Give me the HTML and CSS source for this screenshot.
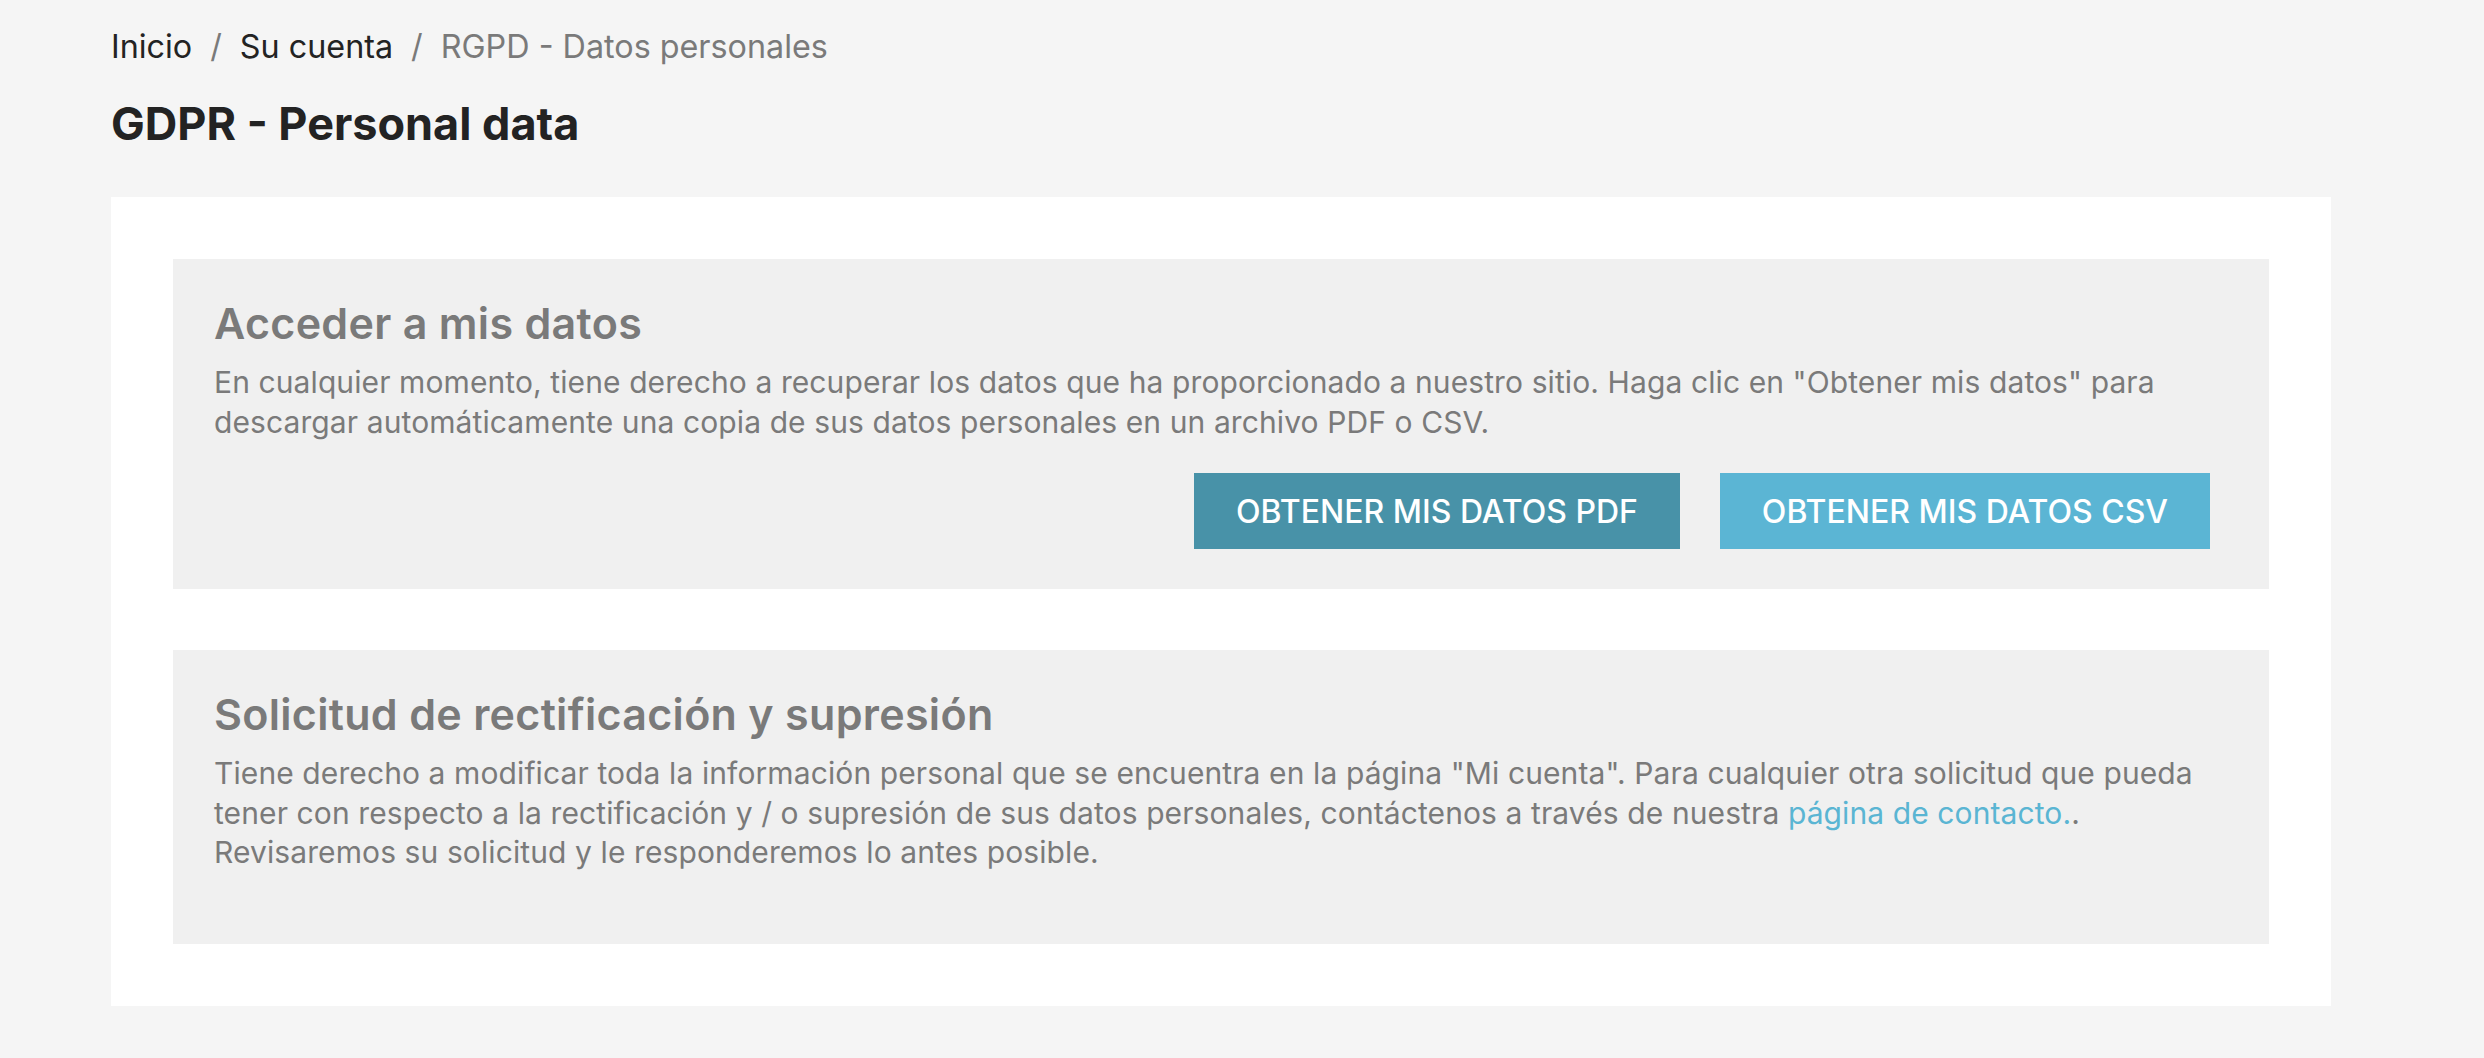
FILE: index.html
```html
<!DOCTYPE html>
<html lang="es">
<head>
  <meta charset="UTF-8" />
  <meta name="viewport" content="width=device-width, initial-scale=1.0" />
  <title>GDPR - Personal data</title>
  <link rel="stylesheet" href="styles.css">
</head>
<body>
  <div class="page">
    <nav class="breadcrumb">
      <a href="#">Inicio</a>
      <span class="sep">/</span>
      <a href="#">Su cuenta</a>
      <span class="sep">/</span>
      <span class="current">RGPD - Datos personales</span>
    </nav>

    <h1 class="page-title">GDPR - Personal data</h1>

    <div class="card">
      <section class="gdpr-block">
        <h2>Acceder a mis datos</h2>
        <p>En cualquier momento, tiene derecho a recuperar los datos que ha proporcionado a nuestro sitio. Haga clic en "Obtener mis datos" para descargar automáticamente una copia de sus datos personales en un archivo PDF o CSV.</p>
        <div class="actions">
          <button class="btn btn-pdf">OBTENER MIS DATOS PDF</button>
          <button class="btn btn-csv">OBTENER MIS DATOS CSV</button>
        </div>
      </section>

      <section class="gdpr-block last">
        <h2>Solicitud de rectificación y supresión</h2>
        <p>Tiene derecho a modificar toda la información personal que se encuentra en la página "Mi cuenta". Para cualquier otra solicitud que pueda tener con respecto a la rectificación y / o supresión de sus datos personales, contáctenos a través de nuestra <a href="#">página de contacto.</a>. Revisaremos su solicitud y le responderemos lo antes posible.</p>
      </section>
    </div>
  </div>
</body>
</html>
```

FILE: styles.css
```css
body {
  margin: 0;
  background: #f5f5f5;
  font-family: Inter, "Noto Sans", sans-serif;
  color: #232323;
}

.page {
  padding: 23px 0 60px 111px;
  width: 2220px;
}

.breadcrumb {
  font-size: 32.3px;
  line-height: 48px;
  display: flex;
  gap: 18px;
}
.breadcrumb a {
  color: #232323;
  text-decoration: none;
}
.breadcrumb .sep {
  color: #7a7a7a;
}
.breadcrumb .current {
  color: #7a7a7a;
}

.page-title {
  font-size: 45px;
  font-weight: 700;
  line-height: 56px;
  margin: 25px 0 45px;
}

.card {
  background: #ffffff;
  padding: 62px;
}

.gdpr-block {
  background: #f0f0f0;
  padding: 37px 41px 40px;
  color: #7a7a7a;
}
.gdpr-block + .gdpr-block {
  margin-top: 61px;
}
.gdpr-block.last {
  padding-bottom: 71px;
}
.gdpr-block h2 {
  font-size: 43px;
  font-weight: 600;
  line-height: 54px;
  margin: 0 0 13px;
  letter-spacing: 0.3px;
}
.gdpr-block p {
  font-size: 30px;
  line-height: 39.6px;
  letter-spacing: 0.1px;
  margin: 0;
}
.gdpr-block p a {
  color: #5ab5d3;
  text-decoration: none;
}

.actions {
  display: flex;
  justify-content: flex-end;
  gap: 40px;
  margin-top: 31px;
  padding-right: 18px;
}
.btn {
  font-family: inherit;
  font-size: 32px;
  font-weight: 500;
  color: #ffffff;
  border: none;
  border-radius: 0;
  height: 76px;
  padding: 0 42px;
  cursor: pointer;
}
.btn-pdf {
  background: #4892a8;
}
.btn-csv {
  background: #5bb5d4;
}
```
